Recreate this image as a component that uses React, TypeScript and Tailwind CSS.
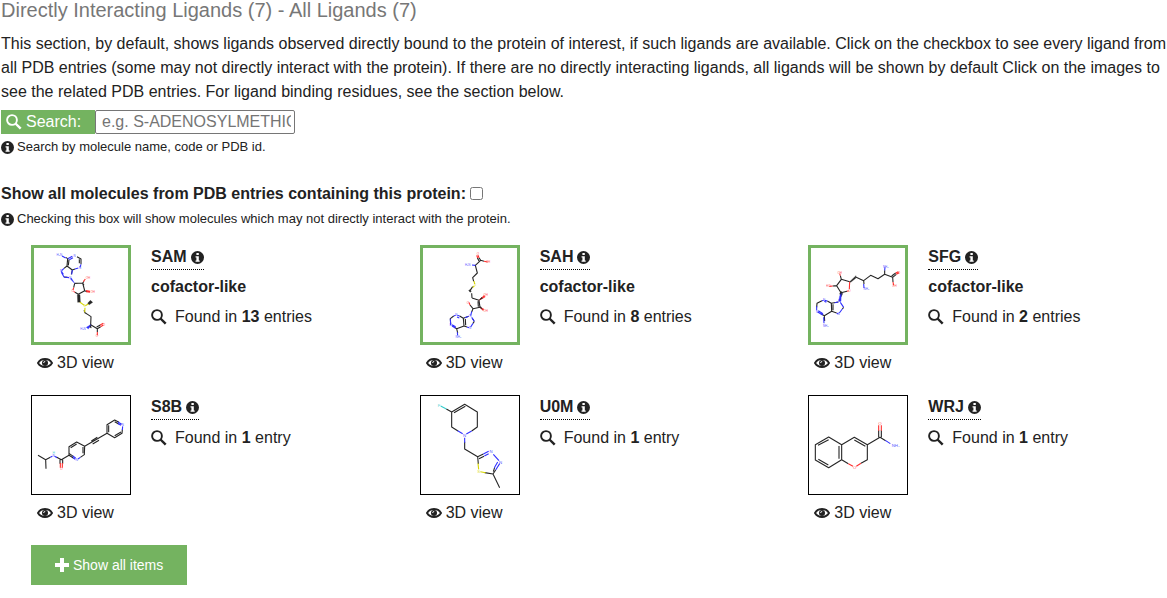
import React from "react";

type Stroke = { c: string; d: string };
type Atom = { x: number; y: number; t: string; c: string };
type Molecule = { viewBox: string; labelSize: number; strokes: Stroke[]; wedges?: Stroke[]; atoms: Atom[] };
type Ligand = { code: string; role?: string; count: number; molecule: Molecule };

const K = "#262626";
const B = "#3030ff";
const R = "#ff3030";
const Y = "#d6d600";
const C = "#33cccc";

const sam: Molecule = {
  viewBox: "27 24 282 282",
  labelSize: 9,
  strokes: [
    { c: K, d: "M122 52L128 56L126 78L142 90L150 87M132 59L130 76M156 50L168 57L168 73M163 58L163 70M126 78L117 85M142 90L139 103M117 111L127 112M149 130L173 129L177 136M149 130L146 143M173 129L179 152L160 163L150 157M173 129L177 124M179 152L186 155M180 218L198 230L197 254L217 266L227 260M215 261L226 255M217 266L217 276M185 221L180 218L177 211" },
    { c: B, d: "M111 48L122 54M128 56L142 49M133 59L144 53M150 87L160 84M142 90L140 103M168 73L165 82M117 85L110 92M109 97L117 111L132 113M109 94L115 103" },
    { c: R, d: "M146 143L144 150M150 157L146 154M175 125L181 117M184 155L195 157M183 152L195 154M227 260L235 255M225 255L235 250M217 276L217 286" },
    { c: Y, d: "M164 186L178 196M180 203L179 217M181 197L193 190" },
  ],
  wedges: [
    { c: K, d: "M157 164L165 164L166 186L158 187ZM188 190L196 181L203 187L193 194ZM197 252L192 261L199 264Z" },
    { c: B, d: "M139 114L149 130L144 125L136 117ZM197 254L184 262L190 267Z" },
  ],
  atoms: [
    { x: 103, y: 47, t: "H₂N", c: B }, { x: 149, y: 51, t: "N", c: B }, { x: 165, y: 87, t: "N", c: B },
    { x: 108, y: 96, t: "N", c: B }, { x: 136, y: 116, t: "N", c: B }, { x: 143, y: 155, t: "O", c: R },
    { x: 189, y: 116, t: "OH", c: R }, { x: 203, y: 160, t: "OH", c: R }, { x: 180, y: 201, t: "S⁺", c: Y },
    { x: 174, y: 270, t: "H₂N", c: B }, { x: 237, y: 257, t: "O", c: R }, { x: 217, y: 291, t: "O⁻", c: R },
  ],
};

const sah: Molecule = {
  viewBox: "24 24 282 282",
  labelSize: 9,
  strokes: [
    { c: K, d: "M197 61L181 76L187 99L173 113L176 124M197 61L192 53M192 63L187 53M197 61L207 64M173 140L165 152M171 174L192 181L195 202L174 206L165 195M189 184L190 200M174 206L170 216M170 160L171 174M161 229L145 235L147 258L156 261M151 237L152 256M145 235L134 228M147 258L125 266L118 262M116 228L106 236L107 251M125 266L128 279M178 244L174 250M173 237L177 242" },
    { c: B, d: "M181 76L171 75M170 215L167 227M161 229L150 233M170 232L178 244M174 250L167 261M156 261L162 263M134 228L127 226M133 234L126 231M116 228L122 226M106 236L107 256M111 258L121 264M111 254L122 260M127 277L128 286" },
    { c: R, d: "M192 53L189 46M188 54L185 46M207 64L218 66M165 195L162 187M195 178L202 173M195 202L203 208" },
    { c: Y, d: "M177 123L179 132M178 138L173 142" },
  ],
  wedges: [
    { c: R, d: "M192 181L207 166L211 171ZM195 202L207 207L204 212Z" },
    { c: K, d: "M164 149L169 153L166 157L161 152ZM192 181L200 172L203 175ZM192 201L198 200L202 208Z" },
  ],
  atoms: [
    { x: 158, y: 79, t: "H₂N", c: B }, { x: 189, y: 44, t: "O", c: R }, { x: 219, y: 69, t: "OH", c: R },
    { x: 180, y: 138, t: "S", c: Y }, { x: 159, y: 192, t: "O", c: R }, { x: 212, y: 169, t: "OH", c: R },
    { x: 212, y: 217, t: "OH", c: R }, { x: 166, y: 230, t: "N", c: B }, { x: 165, y: 266, t: "N", c: B },
    { x: 124, y: 229, t: "N", c: B }, { x: 107, y: 259, t: "N", c: B }, { x: 130, y: 294, t: "NH₂", c: B },
  ],
};

const sfg: Molecule = {
  viewBox: "24 24 282 282",
  labelSize: 9,
  strokes: [
    { c: K, d: "M140 125L115 118L101 137L114 158L132 154M115 118L112 107M101 137L89 138M158 111L182 122L203 106L225 116L245 103L269 112L280 103M266 108L278 99M269 112L270 126M182 122L183 132M245 103L245 91M122 202L118 207M106 186L85 190L86 214L101 219M90 193L90 211M85 190L73 183M86 214L64 227L54 221M57 182L42 190L41 202M64 227L65 243" },
    { c: B, d: "M106 186L95 188M112 187L122 202M118 207L109 219M101 220L106 222M73 183L65 181M70 187L64 184M57 182L62 181M41 199L41 211M44 216L59 225M46 212L60 221M62 232L63 250M182 132L183 144M245 91L246 82" },
    { c: R, d: "M132 154L137 152M140 125L139 147M89 138L79 139M112 107L110 101M280 103L288 98M278 99L286 95M270 126L272 136" },
  ],
  wedges: [
    { c: K, d: "M140 125L159 107L158 115L143 127ZM114 153L119 161L114 171L110 161Z" },
    { c: B, d: "M115 160L114 184L107 184L110 168Z" },
  ],
  atoms: [
    { x: 110, y: 102, t: "OH", c: R }, { x: 76, y: 142, t: "HO", c: R }, { x: 139, y: 156, t: "O", c: R },
    { x: 190, y: 150, t: "NH₂", c: B }, { x: 248, y: 83, t: "NH₂", c: B }, { x: 288, y: 101, t: "O", c: R },
    { x: 274, y: 140, t: "OH", c: R }, { x: 109, y: 186, t: "N", c: B }, { x: 107, y: 226, t: "N", c: B },
    { x: 63, y: 184, t: "N", c: B }, { x: 42, y: 218, t: "N", c: B }, { x: 68, y: 260, t: "NH₂", c: B },
  ],
};

const s8b: Molecule = {
  viewBox: "21 18 294 294",
  labelSize: 10,
  strokes: [
    { c: K, d: "M39 196L62 209L63 236M62 209L76 202M94 201L109 209L132 196L132 170L155 156L179 169L178 194L166 202M105 209L105 221M113 209L113 221M137 173L155 162M174 171L174 190M132 196L145 204M133 191L145 199M179 169L246 130M199 153L217 142M203 162L222 151M246 130L246 104L269 90L282 97M251 127L251 106M269 95L281 102M246 130L269 143L291 130L292 119M269 137L288 126" },
    { c: B, d: "M76 202L82 199M89 199L96 203M143 198L152 204M144 204L151 208M166 202L159 207M279 96L290 103M279 101L288 106M292 120L293 109" },
    { c: R, d: "M106 219L106 233M112 219L112 233" },
  ],
  atoms: [
    { x: 86, y: 191, t: "H", c: C }, { x: 86, y: 200, t: "N", c: B }, { x: 109, y: 241, t: "O", c: R },
    { x: 155, y: 212, t: "N", c: B }, { x: 293, y: 108, t: "N", c: B },
  ],
};

const u0m: Molecule = {
  viewBox: "18 18 294 294",
  labelSize: 13,
  strokes: [
    { c: K, d: "M94 57L110 66L149 43L187 66L187 111L170 123M110 66L110 111L129 123M117 68L151 49M149 155L149 177L188 200L205 192M192 206L207 199M188 200L190 222M209 248L234 252L242 240M235 245L239 232M234 252L254 293" },
    { c: C, d: "M77 48L94 57" },
    { c: B, d: "M128 122L143 131M170 123L154 132M149 143L149 158M205 192L221 184M208 198L221 191M235 193L252 212M242 240L254 221M238 233L248 216" },
    { c: Y, d: "M189 220L191 238M196 245L212 248" },
  ],
  atoms: [
    { x: 72, y: 50, t: "F", c: C }, { x: 149, y: 140, t: "N", c: B }, { x: 228, y: 188, t: "N", c: B },
    { x: 257, y: 221, t: "N", c: B }, { x: 191, y: 248, t: "S", c: Y },
  ],
};

const wrj: Molecule = {
  viewBox: "18 18 294 294",
  labelSize: 13,
  strokes: [
    { c: K, d: "M37 164L77 141L116 164L116 209L77 233L37 210ZM45 166L77 149M108 168L108 206M76 225L46 208M116 164L154 142L193 164L193 209L174 220M154 150L187 169M116 209L136 221M193 164L231 142L248 152M227 142L227 121M235 142L235 121" },
    { c: R, d: "M227 122L227 106M235 122L235 106M136 221L150 229M160 229L174 220" },
    { c: B, d: "M247 151L262 161" },
  ],
  atoms: [
    { x: 231, y: 104, t: "O", c: R }, { x: 155, y: 237, t: "O", c: R }, { x: 278, y: 171, t: "NH₂", c: B },
  ],
};

const ligands: Ligand[] = [
  { code: "SAM", role: "cofactor-like", count: 13, molecule: sam },
  { code: "SAH", role: "cofactor-like", count: 8, molecule: sah },
  { code: "SFG", role: "cofactor-like", count: 2, molecule: sfg },
  { code: "S8B", count: 1, molecule: s8b },
  { code: "U0M", count: 1, molecule: u0m },
  { code: "WRJ", count: 1, molecule: wrj },
];

function InfoIcon() {
  return (
    <svg viewBox="0 0 12 12" className="inline-block size-[13px] shrink-0" aria-hidden="true">
      <circle cx="6" cy="6" r="6" fill="currentColor" />
      <path d="M5 1.800h2.200v1.900H5zM4.200 4.800h3v3.900h.8v1.200H4.200V8.700h.8V6h-.8z" fill="#fff" />
    </svg>
  );
}

function SearchIcon() {
  return (
    <svg viewBox="0 0 16 16" className="size-4 shrink-0" aria-hidden="true">
      <circle cx="6" cy="6" r="4.900" fill="none" stroke="currentColor" strokeWidth="1.900" />
      <path d="M9.500 9.500l5.200 5.200" stroke="currentColor" strokeWidth="2.400" />
    </svg>
  );
}

function EyeIcon() {
  return (
    <svg viewBox="0 0 16 10" className="h-[10px] w-4 shrink-0" aria-hidden="true">
      <path d="M1 5C4 -0.300 12 -0.300 15 5C12 10.300 4 10.300 1 5Z" fill="#fff" stroke="currentColor" strokeWidth="1.900" />
      <circle cx="8" cy="5" r="3" fill="currentColor" />
      <path d="M6.600 5A1.500 1.500 0 0 1 8.200 3.500" fill="none" stroke="#fff" strokeWidth="0.900" />
    </svg>
  );
}

function PlusIcon() {
  return (
    <svg viewBox="0 0 14 14" className="size-[14px] shrink-0" aria-hidden="true">
      <path d="M5 0h4v5h5v4H9v5H5V9H0V5h5z" fill="currentColor" />
    </svg>
  );
}

function Structure({ molecule, label }: { molecule: Molecule; label: string }) {
  return (
    <svg viewBox={molecule.viewBox} className="block size-full" role="img" aria-label={label}>
      {molecule.strokes.map((s) => (
        <path key={s.c} d={s.d} stroke={s.c} strokeWidth={3.3} strokeLinejoin="round" fill="none" />
      ))}
      {molecule.wedges?.map((s) => <path key={s.c} d={s.d} fill={s.c} stroke={s.c} />)}
      {molecule.atoms.map((a) => (
        <text
          key={`${a.x}-${a.y}`}
          x={a.x}
          y={a.y}
          fill={a.c}
          fontSize={molecule.labelSize}
          textAnchor="middle"
          opacity={0.8}
        >
          {a.t}
        </text>
      ))}
    </svg>
  );
}

function LigandCard({ ligand }: { ligand: Ligand }) {
  return (
    <article className="flex h-[150px] gap-5 pl-[30px]">
      <div className="w-[100px] shrink-0">
        <a
          href="#entries"
          className={
            ligand.role
              ? "block size-[100px] border-[3px] border-[#74b360]"
              : "block size-[100px] border border-black"
          }
        >
          <Structure molecule={ligand.molecule} label={ligand.code} />
        </a>
        <a href="#view" className="mt-[6px] flex items-center gap-1 pl-[6px] leading-6">
          <EyeIcon />
          3D view
        </a>
      </div>
      <div className="flex flex-col items-start">
        <h3 className="flex items-center gap-1 border-b border-dotted border-black font-bold leading-6">
          {ligand.code}
          <InfoIcon />
        </h3>
        {ligand.role && <p className="mt-[5px] font-bold leading-6">{ligand.role}</p>}
        <a href="#entries" className="mt-[6px] flex items-center gap-2 leading-6">
          <SearchIcon />
          <span>
            Found in <b>{ligand.count}</b> {ligand.count === 1 ? "entry" : "entries"}
          </span>
        </a>
      </div>
    </article>
  );
}

export default function App() {
  return (
    <main className="bg-white pl-px font-['Liberation_Sans',Arial,sans-serif] text-base text-[#222]">
      <h2 className="text-xl leading-5 text-[#777]">Directly Interacting Ligands (7) - All Ligands (7)</h2>
      <p className="mt-3 leading-6">
        This section, by default, shows ligands observed directly bound to the protein of interest, if such ligands are
        available. Click on the checkbox to see every ligand from all PDB entries (some may not directly interact with
        the protein). If there are no directly interacting ligands, all ligands will be shown by default Click on the
        images to see the related PDB entries. For ligand binding residues, see the section below.
      </p>
      <div className="mt-[6px] flex h-6">
        <label htmlFor="search" className="flex w-[94px] items-center gap-1 bg-[#74b360] pl-[5px] text-white">
          <SearchIcon />
          Search:
        </label>
        <input
          id="search"
          type="text"
          placeholder="e.g. S-ADENOSYLMETHIONINE"
          className="w-[200px] rounded-xs border border-[#767676] bg-white pr-[3px] pl-[6px] placeholder:text-[#757575]"
        />
      </div>
      <p className="mt-[5px] flex items-center gap-[3px] text-[13px] leading-4">
        <InfoIcon />
        Search by molecule name, code or PDB id.
      </p>
      <div className="mt-[27px] flex items-center gap-1 leading-6">
        <label htmlFor="show-all" className="font-bold">
          Show all molecules from PDB entries containing this protein:
        </label>
        <input id="show-all" type="checkbox" className="mb-[2px] size-[13px]" />
      </div>
      <p className="mt-[5px] flex items-center gap-[3px] text-[13px] leading-4">
        <InfoIcon />
        Checking this box will show molecules which may not directly interact with the protein.
      </p>
      <section className="mt-[18px] grid grid-cols-3">
        {ligands.map((l) => (
          <LigandCard key={l.code} ligand={l} />
        ))}
      </section>
      <button
        type="button"
        className="ml-[30px] flex h-10 items-center gap-1 bg-[#74b360] px-6 text-sm text-white"
      >
        <PlusIcon />
        Show all items
      </button>
    </main>
  );
}
